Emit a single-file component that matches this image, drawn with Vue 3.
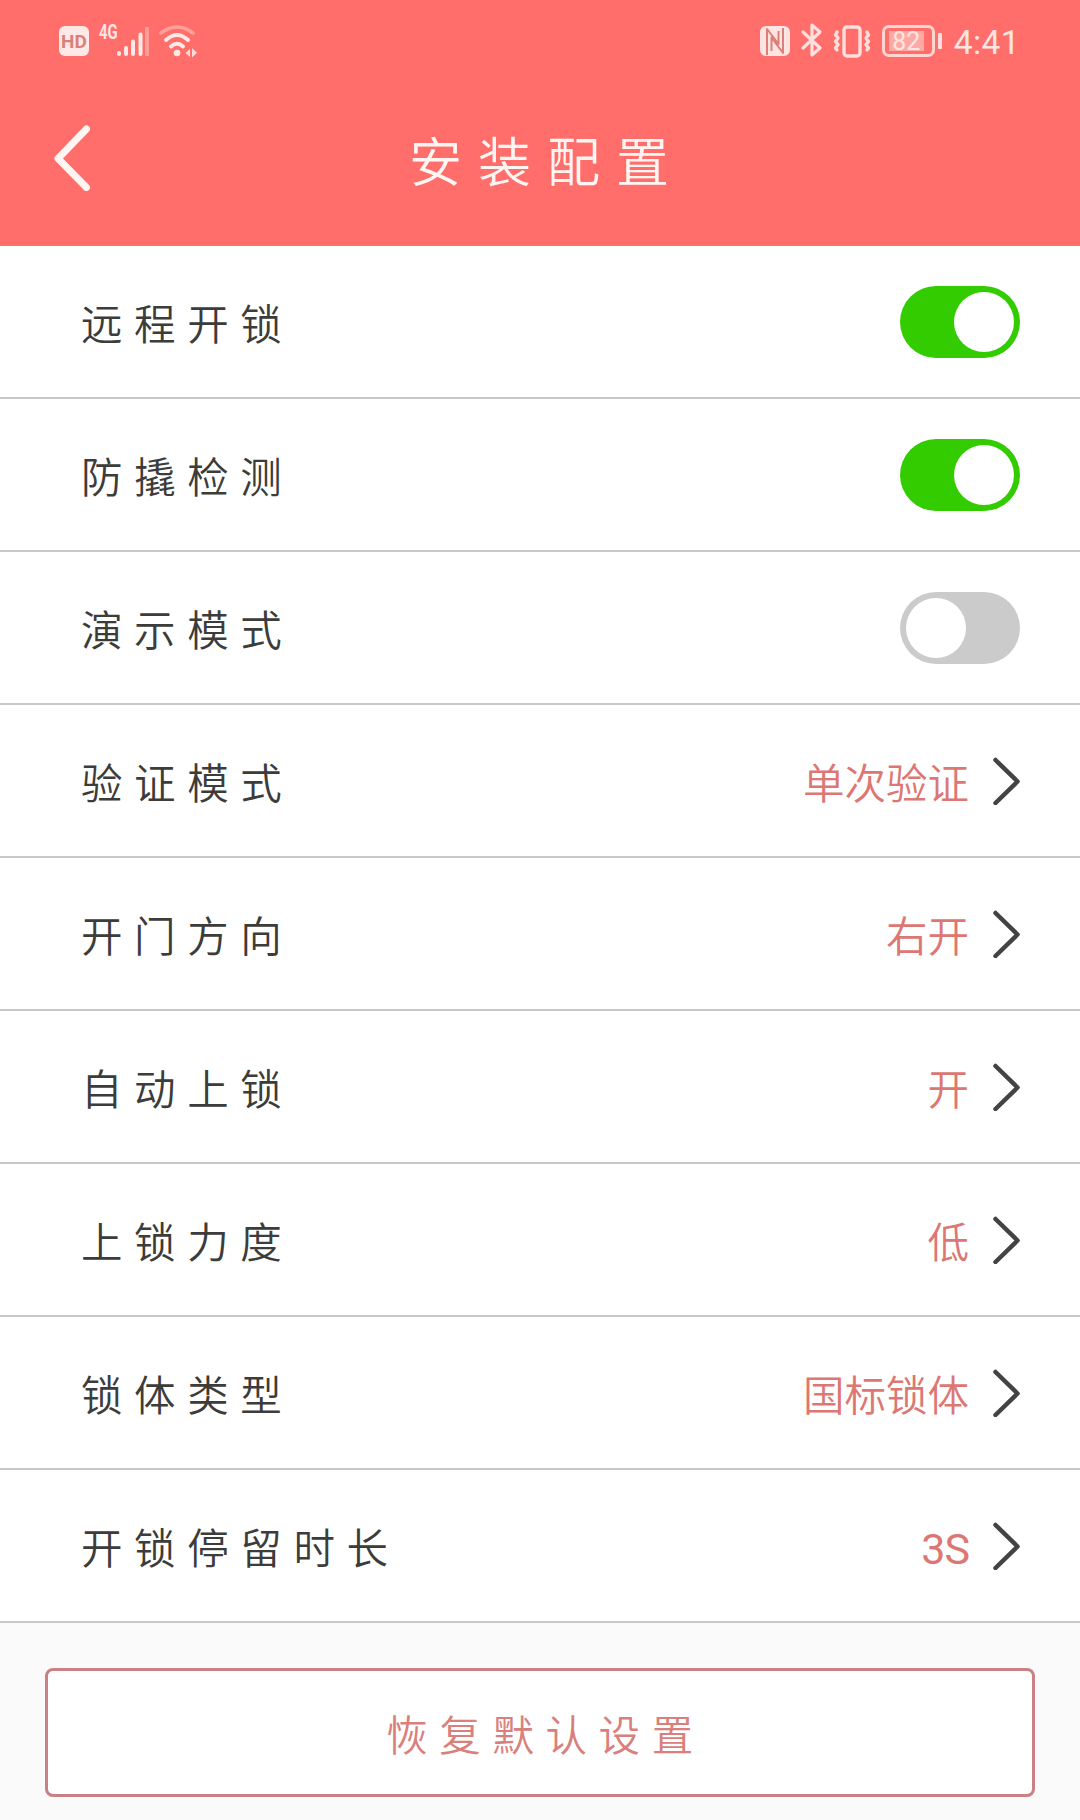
<template>
  <div class="page">
    <div class="header">
      <div class="status-bar">
        <div class="status-left">
          <span class="hd">HD</span>
          <span class="net">4G</span>
          <svg class="signal" width="34" height="34" viewBox="0 0 34 34">
            <g stroke="#ffe9e6" stroke-width="4" stroke-linecap="round">
              <path d="M3 29v1M10 24v6M17 17.500v12.500M24.500 10.500v19.500" />
            </g>
            <path d="M31 3v29" stroke="#ff9c98" stroke-width="4" />
          </svg>
          <svg class="wifi" width="40" height="34" viewBox="0 0 40 34">
            <g fill="none" stroke-linecap="round">
              <path d="M2 9Q18 -3 34 9" stroke="#ffa09b" stroke-width="3.5" />
              <path d="M7 16Q18 6 29 16" stroke="#ffe9e6" stroke-width="4" />
              <path d="M12 22.500Q18 17 24 22.500" stroke="#ffe9e6" stroke-width="4" />
            </g>
            <circle cx="18" cy="29" r="3.300" fill="#ffe9e6" />
            <path d="M31 25v8l-4.500-4zM33 24v9.500l5-4.700z" fill="#ffdcd8" />
          </svg>
        </div>
        <div class="status-right">
          <svg width="32" height="32" viewBox="0 0 32 32">
            <rect x="1" y="1" width="30" height="30" rx="6" fill="#ffe5e2" />
            <path d="M8 30V4L19.500 19V6M12.500 26V12.500L24 28V3" fill="none" stroke="#dc7e7a" stroke-width="2" stroke-linejoin="round" />
          </svg>
          <svg class="bt" width="24" height="36" viewBox="0 0 24 36">
            <path d="M3 10L20 26L12 33V3L20 10L3 26" fill="none" stroke="#ffe0dc" stroke-width="3.200" stroke-linejoin="round" stroke-linecap="round" />
          </svg>
          <svg class="vibrate" width="40" height="34" viewBox="0 0 40 34">
            <g fill="none" stroke="#ffe0dc" stroke-width="3.400" stroke-linejoin="round" stroke-linecap="round">
              <rect x="12" y="3" width="16" height="29" rx="3" />
              <path d="M5 8l-1.500 3 2.500 3-2.500 3.500 2.500 3-2.500 3.500 1.500 2M35 8l1.500 3-2.500 3 2.500 3.500-2.500 3 2.500 3.500-1.500 2" />
            </g>
          </svg>
          <div class="battery"><span class="level">82</span></div>
          <span class="battery-tip"></span>
          <span class="clock">4:41</span>
        </div>
      </div>
      <div class="nav">
        <svg class="back" width="36" height="66" viewBox="0 0 36 66" @click="goBack">
          <path d="M32.500 4L4 33.500L32.500 62.500" fill="none" stroke="#fff6f3" stroke-width="7" stroke-linecap="round" stroke-linejoin="round" />
        </svg>
        <h1 class="title">安装配置</h1>
      </div>
    </div>

    <div class="list">
      <div v-for="item in items" :key="item.label" class="row">
        <span class="label">{{ item.label }}</span>
        <div v-if="item.type === 'switch'" class="switch" :class="{ on: item.value }" @click="item.value = !item.value">
          <div class="knob"></div>
        </div>
        <div v-else class="select">
          <span class="value" :class="{ latin: item.latin }">{{ item.value }}</span>
          <svg width="27" height="48" viewBox="0 0 27 48">
            <path d="M2.500 3L24.500 24.500L2.500 46" fill="none" stroke="#434343" stroke-width="4.500" stroke-linecap="round" stroke-linejoin="round" />
          </svg>
        </div>
      </div>
    </div>

    <div class="footer">
      <button class="reset" @click="resetItems">恢复默认设置</button>
    </div>
  </div>
</template>

<script setup>
import { ref } from 'vue'

const defaults = [
  { label: '远程开锁', type: 'switch', value: true },
  { label: '防撬检测', type: 'switch', value: true },
  { label: '演示模式', type: 'switch', value: false },
  { label: '验证模式', type: 'select', value: '单次验证' },
  { label: '开门方向', type: 'select', value: '右开' },
  { label: '自动上锁', type: 'select', value: '开' },
  { label: '上锁力度', type: 'select', value: '低' },
  { label: '锁体类型', type: 'select', value: '国标锁体' },
  { label: '开锁停留时长', type: 'select', value: '3S', latin: true }
]

const items = ref(defaults.map(item => ({ ...item })))

function resetItems() {
  items.value = defaults.map(item => ({ ...item }))
}

function goBack() {
  window.history.back()
}
</script>

<style>
body { margin: 0; background: #fafafa; }
</style>

<style scoped>
.page { width: 1080px; height: 1820px; overflow: hidden; background: #fafafa; font-family: Roboto, "Noto Sans CJK SC", sans-serif; font-weight: 350; }

.header { height: 246px; background: #ff6e6b; box-sizing: border-box; border-bottom: 1px solid #e07c7a; }
.status-bar { height: 82px; display: flex; justify-content: space-between; padding: 0 60px 0 59px; color: #ffe5e2; }
.status-left, .status-right { display: flex; align-items: center; }
.hd { width: 30px; height: 30px; line-height: 31px; border-radius: 6px; background: #ffe9e6; color: #d9807c; font-size: 19px; font-weight: 700; text-align: center; }
.net { margin: -18px 0 0 10px; width: 17px; font-size: 20px; line-height: 17px; font-weight: 700; transform: scaleX(0.74); transform-origin: left center; }
.signal { margin: -1px 9px 0 0; }
.wifi { margin-top: -1px; }
.bt { margin-left: 9px; margin-top: -3px; }
.vibrate { margin-left: 8px; }
.battery { width: 53px; height: 32px; box-sizing: border-box; margin-left: 10px; padding: 3px; border: 3px solid #ffd5d1; border-radius: 7px; }
.level { display: block; width: 35px; height: 20px; line-height: 21px; margin-left: 1px; background: #ffa9a5; font-size: 25px; font-weight: 400; text-align: center; }
.battery-tip { width: 4px; height: 16px; margin-left: 3px; border-radius: 1px; background: #ffe0dc; }
.clock { margin-left: 12px; padding-top: 2px; font-size: 33.5px; font-weight: 400; letter-spacing: 0.4px; }

.nav { height: 152px; display: flex; align-items: center; padding-left: 54px; }
.back { flex: none; }
.title { flex: 1; margin: 12px 91px 0 15px; font-size: 53px; line-height: 70px; font-weight: 350; letter-spacing: 16px; text-align: center; color: #fff6f3; }

.row { height: 153px; box-sizing: border-box; display: flex; align-items: center; justify-content: space-between; padding: 0 60px 0 81px; background: #fff; border-bottom: 2px solid #c8c8c8; }
.label { padding-top: 1px; font-size: 41.5px; letter-spacing: 11.6px; color: #3c3c3a; }
.switch { width: 120px; height: 72px; box-sizing: border-box; padding: 6px; border-radius: 36px; background: #cbcbcb; display: flex; }
.switch.on { background: #33cc00; justify-content: flex-end; }
.knob { width: 60px; height: 60px; border-radius: 50%; background: #fff; }
.select { display: flex; align-items: center; gap: 24px; }
.value { padding-top: 1px; font-size: 41.5px; color: #dc7773; }
.value.latin { padding-top: 6px; font-size: 43px; font-weight: 400; letter-spacing: -1px; }

.footer { padding: 45px; }
.reset { display: block; width: 990px; height: 129px; box-sizing: border-box; padding: 0 0 0 11px; border: 3px solid #c98186; border-radius: 8px; background: #fff; color: #d9807d; font-family: inherit; font-size: 41.5px; font-weight: 350; letter-spacing: 11.6px; }
</style>
